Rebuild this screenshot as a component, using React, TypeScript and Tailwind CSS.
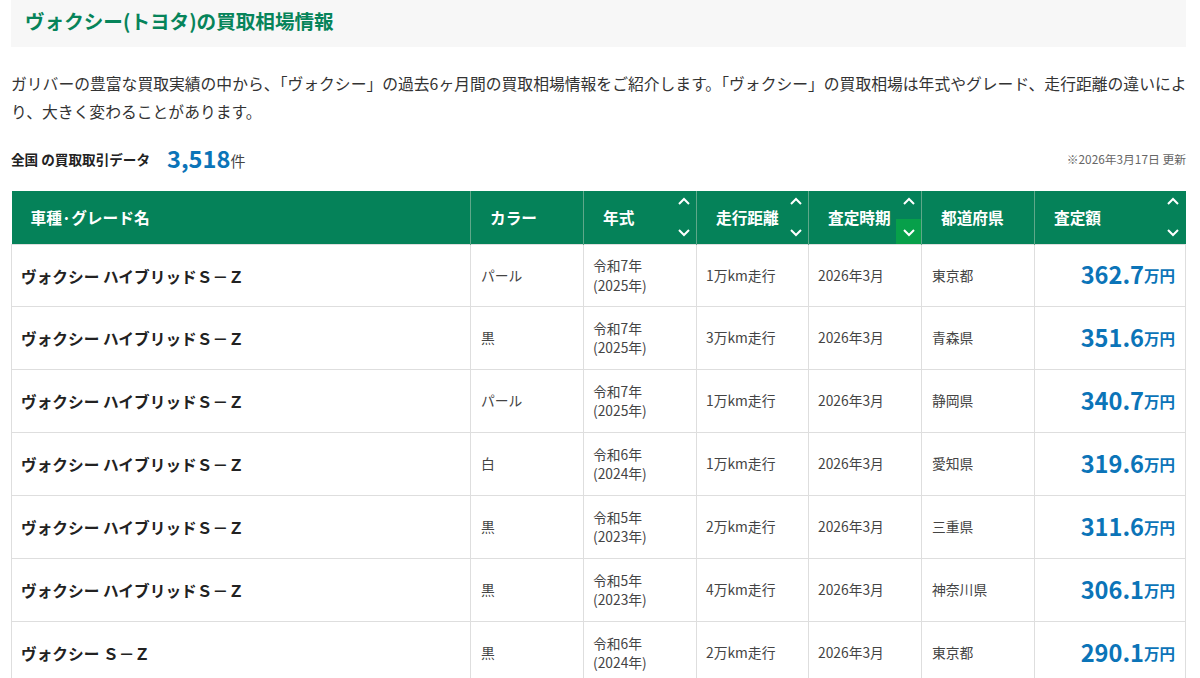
import React from 'react';

const font = { fontFamily: '"Noto Sans CJK JP", "Noto Sans", sans-serif' };

const rows = [
  ['ヴォクシー ハイブリッドＳ－Ｚ', 'パール', '令和7年', '(2025年)', '1万km走行', '東京都', '362.7'],
  ['ヴォクシー ハイブリッドＳ－Ｚ', '黒', '令和7年', '(2025年)', '3万km走行', '青森県', '351.6'],
  ['ヴォクシー ハイブリッドＳ－Ｚ', 'パール', '令和7年', '(2025年)', '1万km走行', '静岡県', '340.7'],
  ['ヴォクシー ハイブリッドＳ－Ｚ', '白', '令和6年', '(2024年)', '1万km走行', '愛知県', '319.6'],
  ['ヴォクシー ハイブリッドＳ－Ｚ', '黒', '令和5年', '(2023年)', '2万km走行', '三重県', '311.6'],
  ['ヴォクシー ハイブリッドＳ－Ｚ', '黒', '令和5年', '(2023年)', '4万km走行', '神奈川県', '306.1'],
  ['ヴォクシー Ｓ－Ｚ', '黒', '令和6年', '(2024年)', '2万km走行', '東京都', '290.1'],
];

const Chevron = ({ up }: { up?: boolean }) => (
  <svg width="12" height="8" viewBox="0 0 12 8" fill="none" stroke="white" strokeWidth="2">
    <path d={up ? 'M1 7l5-5 5 5' : 'M1 1l5 5 5-5'} />
  </svg>
);

const Head = ({ label, sort, active }: { label: string; sort?: boolean; active?: boolean }) => (
  <th className="relative border-l border-[#5fa88a] p-0 pt-[1px] pl-[19px] text-left text-[15.7px] font-bold text-white first:border-l-0">
    {label}
    {sort && (
      <>
        <span className="absolute right-0 top-0 flex h-[20px] w-[25px] items-center justify-center">
          <Chevron up />
        </span>
        <span className={`absolute right-0 bottom-0 flex h-[25px] w-[25px] items-center justify-center pt-[4px] ${active ? 'bg-[#07a04a]' : ''}`}>
          <Chevron />
        </span>
      </>
    )}
  </th>
);

export default function App() {
  return (
    <div className="h-[678px] w-[1200px] overflow-hidden bg-white pl-[11px] pr-[14px] text-[#333]" style={font}>
      <h2 className="flex h-[47px] items-center bg-[#f7f7f7] pb-[5px] pl-[14px] text-[19.6px] font-bold text-[#06845a]">
        ヴォクシー(トヨタ)の買取相場情報
      </h2>
      <p className="-mr-[3px] mt-[23px] text-[15.8px] leading-[28px] text-[#333]">
        ガリバーの豊富な買取実績の中から、「ヴォクシー」の過去6ヶ月間の買取相場情報をご紹介します。「ヴォクシー」の買取相場は年式やグレード、走行距離の違いにより、大きく変わることがあります。
      </p>
      <div className="mt-[15px] flex h-[36px] items-center justify-between">
        <div className="flex items-center">
          <span className="text-[13.6px] font-bold text-[#222]">全国 の買取取引データ</span>
          <span className="ml-[17px] text-[23.6px] font-bold text-[#0b74b8]">3,518</span>
          <span className="mt-[5px] text-[15px] text-[#444]">件</span>
        </div>
        <span className="text-[11.8px] text-[#666]">※2026年3月17日 更新</span>
      </div>
      <table className="mt-[14px] w-[1174px] table-fixed border-collapse">
        <colgroup>
          <col className="w-[459px]" />
          <col className="w-[113px]" />
          <col className="w-[113px]" />
          <col className="w-[112px]" />
          <col className="w-[113px]" />
          <col className="w-[113px]" />
          <col className="w-[151px]" />
        </colgroup>
        <thead>
          <tr className="h-[53px] bg-[#058259]">
            <Head label="車種·グレード名" />
            <Head label="カラー" />
            <Head label="年式" sort />
            <Head label="走行距離" sort />
            <Head label="査定時期" sort active />
            <Head label="都道府県" />
            <Head label="査定額" sort />
          </tr>
        </thead>
        <tbody>
          {rows.map((r, i) => (
            <tr key={i} className={`text-[13.8px] leading-[19.5px] text-[#444] ${i === 0 ? 'h-[62px]' : 'h-[63px]'}`}>
              <td className="border border-[#dedede] pl-[9px] pt-[3px] text-[15.7px] font-bold text-[#222]">{r[0]}</td>
              <td className="border border-[#dedede] pl-[10px] pt-[1px]">{r[1]}</td>
              <td className="border border-[#dedede] pl-[9px] pt-[1px]">
                {r[2]}
                <br />
                {r[3]}
              </td>
              <td className="border border-[#dedede] pl-[9px] pt-[1px]">{r[4]}</td>
              <td className="border border-[#dedede] pl-[9px] pt-[1px]">2026年3月</td>
              <td className="border border-[#dedede] pl-[10px] pt-[1px]">{r[5]}</td>
              <td className="border border-[#dedede] pr-[10px] pt-[4px] text-right">
                <span className="text-[23.6px] font-bold text-[#0b74b8]">{r[6]}</span>
                <span className="align-[2px] text-[15.5px] font-bold text-[#0b74b8]">万円</span>
              </td>
            </tr>
          ))}
        </tbody>
      </table>
    </div>
  );
}
